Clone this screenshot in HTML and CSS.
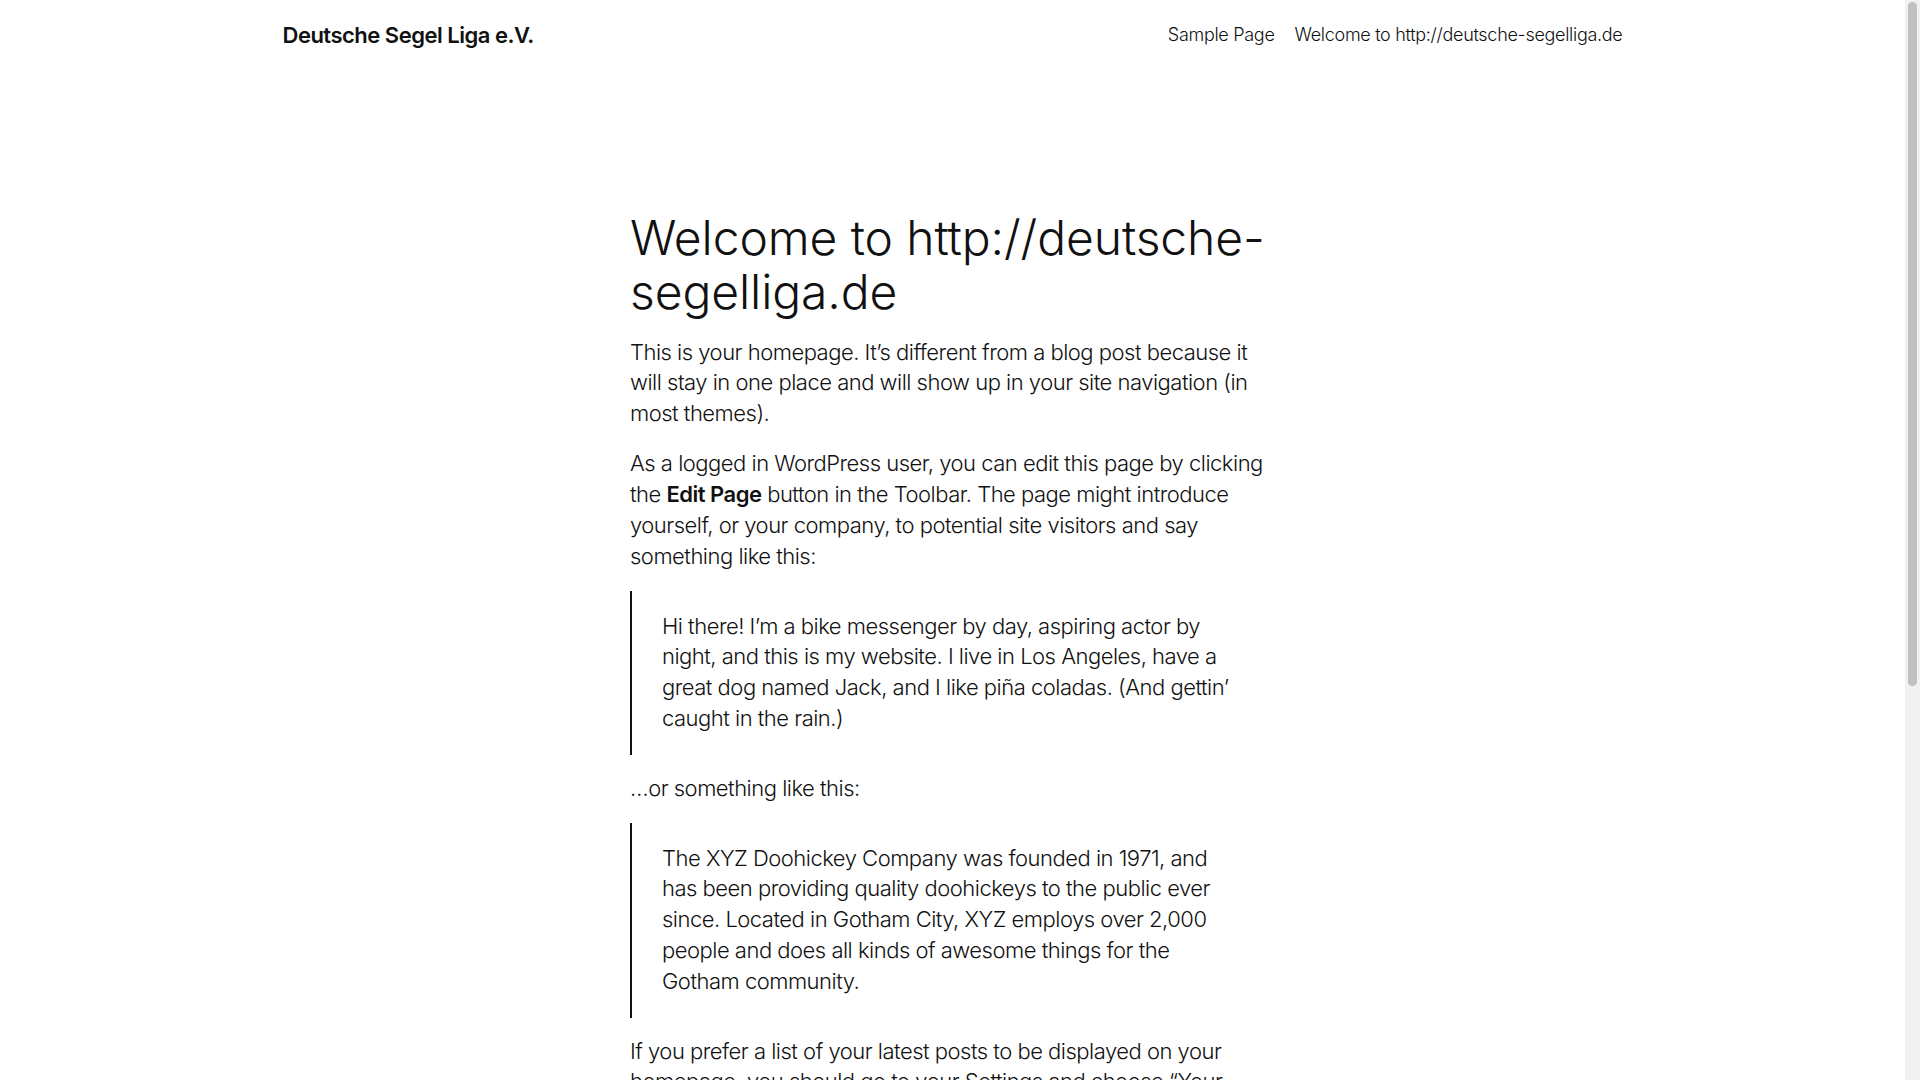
FILE: index.html
```html
<!DOCTYPE html>
<html lang="de">
<head>
<meta charset="utf-8">
<title>Deutsche Segel Liga e.V.</title>
<link rel="stylesheet" href="styles.css">
</head>
<body>
<div class="page">
  <header class="site-header">
    <div class="site-title">Deutsche Segel Liga e.V.</div>
    <nav class="site-nav">
      <a href="#">Sample Page</a>
      <a href="#">Welcome to http://deutsche-segelliga.de</a>
    </nav>
  </header>
  <main class="entry">
    <h1 class="entry-title">Welcome to http://deutsche-segelliga.de</h1>
    <p>This is your homepage. It’s different from a blog post because it will stay in one place and will show up in your site navigation (in most themes).</p>
    <p>As a logged in WordPress user, you can edit this page by clicking the <strong>Edit Page</strong> button in the Toolbar. The page might introduce yourself, or your company, to potential site visitors and say something like this:</p>
    <blockquote class="quote"><p>Hi there! I’m a bike messenger by day, aspiring actor by night, and this is my website. I live in Los Angeles, have a great dog named Jack, and I like piña coladas. (And gettin’ caught in the rain.)</p></blockquote>
    <p>…or something like this:</p>
    <blockquote class="quote"><p>The XYZ Doohickey Company was founded in 1971, and has been providing quality doohickeys to the public ever since. Located in Gotham City, XYZ employs over 2,000 people and does all kinds of awesome things for the Gotham community.</p></blockquote>
    <p>If you prefer a list of your latest posts to be displayed on your homepage, you should go to your Settings and choose “Your latest posts” under Homepage display. Have fun!</p>
  </main>
</div>
<div class="scrollbar" aria-hidden="true"><div class="scrollbar-thumb"></div></div>
</body>
</html>
```
FILE: styles.css
```css
* {
  box-sizing: border-box;
}
html, body {
  margin: 0;
  padding: 0;
  background: #ffffff;
}
body {
  font-family: Inter, "Liberation Sans", sans-serif;
  font-weight: 300;
  font-size: 22px;
  line-height: 1.4;
  letter-spacing: -0.5px;
  color: #111111;
}
a {
  color: inherit;
  text-decoration: none;
}
.page {
  width: calc(100% - 15px);
}
.site-header {
  width: 1340px;
  margin: 0 auto;
  height: 70px;
  display: flex;
  align-items: center;
  justify-content: space-between;
}
.site-title {
  font-size: 22px;
  font-weight: 600;
  letter-spacing: -0.5px;
}
.site-nav {
  display: flex;
  gap: 20px;
  font-size: 18px;
  font-weight: 300;
  letter-spacing: -0.3px;
}
.entry {
  width: 645px;
  margin: 0 auto;
  padding-top: 140.6px;
  padding-bottom: 80px;
}
.entry-title {
  font-size: 48px;
  font-weight: 300;
  line-height: 54px;
  letter-spacing: -0.1px;
  margin: 0 0 18px;
}
.entry p {
  margin: 0 0 19.5px;
}
.entry strong {
  font-weight: 600;
}
.quote {
  margin: 0 0 18px;
  border-left: 2px solid #111111;
  padding: 19.5px 40px 21px 30px;
}
.entry .quote p {
  margin: 0;
}
.scrollbar {
  position: fixed;
  top: 0;
  right: 0;
  width: 15px;
  height: 100vh;
  background: #f1f1f1;
}
.scrollbar-thumb {
  margin: 2px 3px 0;
  height: 684px;
  border-radius: 5px;
  background: #c1c1c1;
}
```
